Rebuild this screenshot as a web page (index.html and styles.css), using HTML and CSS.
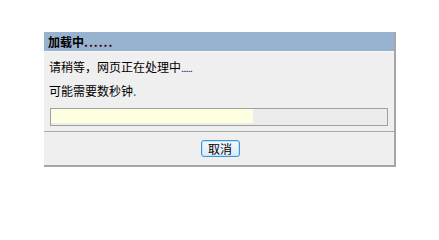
FILE: index.html
```html
<!DOCTYPE html>
<html lang="zh-CN">
<head>
<meta charset="utf-8">
<title>加载中</title>
<link rel="stylesheet" href="styles.css">
</head>
<body>
<div class="dialog">
  <div class="dialog-title">加载中<span class="dots">......</span></div>
  <div class="dialog-body">
    <p class="msg">请稍等，网页正在处理中<span class="dots small">......</span></p>
    <p class="msg">可能需要数秒钟<span class="dot">.</span></p>
    <div class="progress"><div class="progress-fill" style="width: 60%"></div></div>
  </div>
  <div class="dialog-footer">
    <button class="btn" type="button">取消</button>
  </div>
</div>
</body>
</html>
```

FILE: styles.css
```css
html, body {
  margin: 0;
  padding: 0;
  background: #ffffff;
}

body {
  font-family: "Noto Sans CJK SC", "Liberation Sans", sans-serif;
  font-size: 12px;
  color: #000;
  padding: 32px 0 0 44px;
}

.dialog {
  width: 350px;
  background: #efefef;
  border-right: 2px solid #a6a6a6;
  border-bottom: 2px solid #a6a6a6;
}

.dialog-title {
  height: 19px;
  line-height: 19px;
  padding-left: 4px;
  background: #98b3d0;
  font-weight: bold;
  border-bottom: 1px solid #f7f7f7;
}

.dialog-title .dots {
  color: #3a0000;
  letter-spacing: 1px;
}

.dialog-body {
  padding: 7px 6px 5px 5px;
  display: flex;
  flex-direction: column;
  gap: 7px;
}

.msg {
  margin: 0;
  line-height: 16px;
}

.dots.small {
  color: #223366;
  letter-spacing: -1px;
  font-size: 10px;
}

.dot {
  color: #1e5f8f;
}

.progress {
  margin: 2px 0 0 1px;
  height: 16px;
  border: 1px solid #a0a0a0;
  background: #ececec;
}

.progress-fill {
  height: 14px;
  background: #fefee0;
}

.dialog-footer {
  border-top: 1px solid #a8a8a8;
  height: 33px;
  display: flex;
  align-items: center;
  justify-content: center;
}

.btn {
  font-family: "Noto Sans CJK SC", "Liberation Sans", sans-serif;
  font-size: 12px;
  width: 39px;
  height: 17px;
  padding: 0;
  margin-left: 2px;
  line-height: 14px;
  color: #000;
  border: 1px solid #3a98d8;
  border-radius: 3px;
  background: linear-gradient(#f4f9fd, #dcecf8);
  box-shadow: inset 0 0 0 1px #c2e2f8;
}
```
